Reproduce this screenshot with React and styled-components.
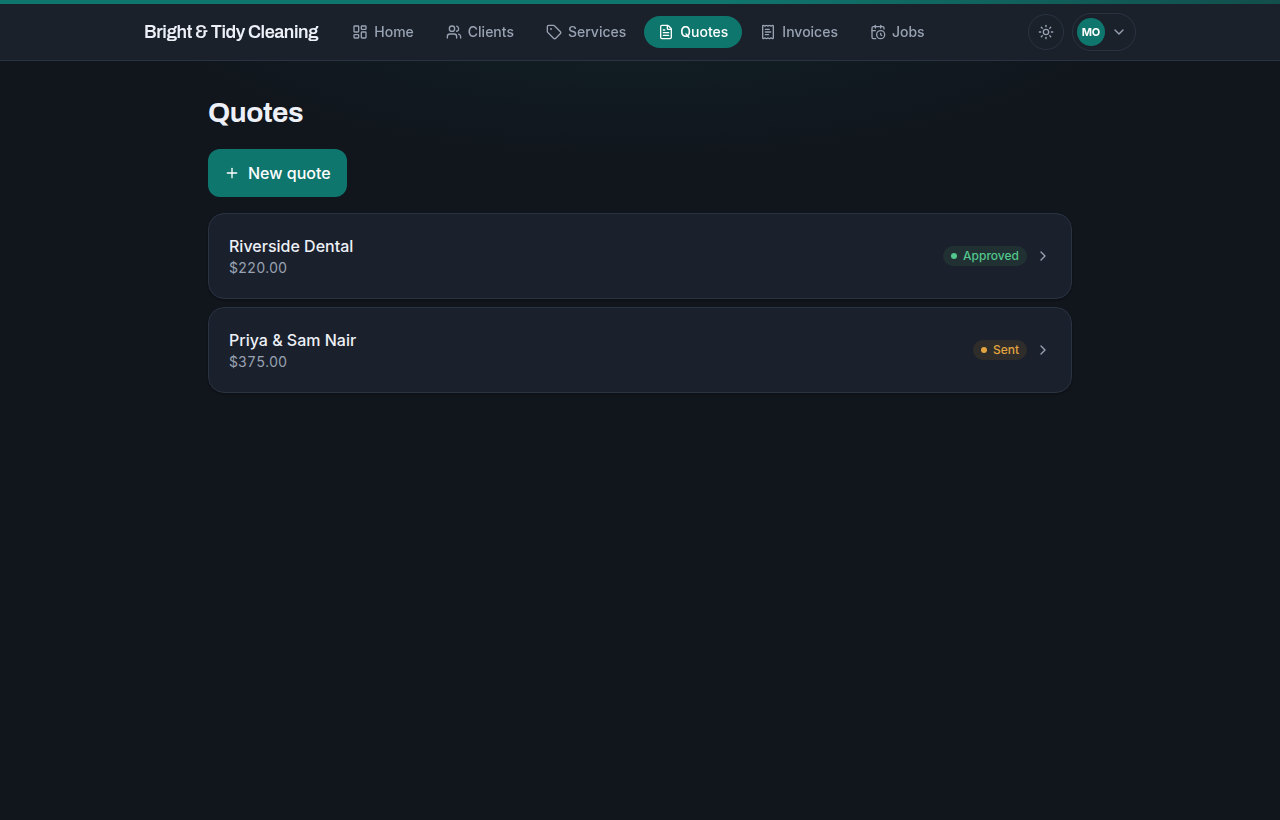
import React from "react";
import styled, { createGlobalStyle, css } from "styled-components";
import {
  LayoutDashboard,
  Users,
  Tag,
  FileText,
  ReceiptText,
  CalendarClock,
  Sun,
  ChevronDown,
  ChevronRight,
  Plus,
} from "lucide-react";

const GlobalStyle = createGlobalStyle`
  *, *::before, *::after { box-sizing: border-box; }
  html { background: #11151c; }
  body {
    margin: 0;
    min-height: 100vh;
    background: radial-gradient(ellipse 540px 175px at 50% 0, rgba(18, 122, 124, 0.11), rgba(18, 122, 124, 0)) no-repeat #11151c;
    color: #edf0f7;
    font-family: Inter, "Liberation Sans", sans-serif;
    font-size: 16px;
    line-height: 24px;
  }
  svg { display: block; flex: none; }
`;

const AccentBar = styled.div`
  height: 4px;
  background: linear-gradient(90deg, #0f766e 0%, #0f766e 55%, #124e4c 100%);
`;

const Header = styled.header`
  height: 57px;
  background: #1a212b;
  border-bottom: 1px solid #2a3342;
  will-change: transform;
`;

const HeaderInner = styled.div`
  display: flex;
  align-items: center;
  width: 992px;
  height: 56px;
  margin: 0 auto;
`;

const Brand = styled.span`
  margin-right: 20px;
  white-space: nowrap;
  font-family: Archivo, "Liberation Sans", sans-serif;
  font-size: 18px;
  font-weight: 600;
  letter-spacing: -0.45px;
`;

const Nav = styled.nav`
  display: flex;
  gap: 4px;
`;

const NavItem = styled.a`
  display: flex;
  align-items: center;
  gap: 6px;
  height: 32px;
  padding: 0 14px;
  border-radius: 16px;
  color: #98a2b3;
  font-size: 14px;
  font-weight: 500;
  line-height: 20px;
  ${({ $active }) =>
    $active &&
    css`
      background: #0f766e;
      color: #fff;
    `}
`;

const Tools = styled.div`
  display: flex;
  align-items: center;
  gap: 8px;
  margin-left: auto;
  color: #98a2b3;
`;

const ThemeButton = styled.button`
  display: grid;
  place-items: center;
  width: 36px;
  height: 36px;
  padding: 0;
  border: 1px solid #2a3342;
  border-radius: 50%;
  background: none;
  color: inherit;
`;

const ProfileButton = styled.button`
  display: flex;
  align-items: center;
  gap: 6px;
  width: 64px;
  height: 38px;
  padding: 0 0 0 4px;
  border: 1px solid #2a3342;
  border-radius: 19px;
  background: none;
  color: inherit;
`;

const Avatar = styled.span`
  display: grid;
  place-items: center;
  width: 28px;
  height: 28px;
  border-radius: 50%;
  background: #0f766e;
  color: #fff;
  font-family: Inter, sans-serif;
  font-size: 11px;
  font-weight: 700;
  line-height: 16px;
`;

const Main = styled.main`
  width: 864px;
  margin: 0 auto;
  padding-top: 32px;
`;

const Title = styled.h1`
  margin: 0 0 16px;
  font-family: Archivo, "Liberation Sans", sans-serif;
  font-size: 28px;
  font-weight: 700;
  letter-spacing: -0.42px;
  line-height: 40px;
`;

const PrimaryButton = styled.button`
  display: flex;
  align-items: center;
  gap: 8px;
  height: 48px;
  padding: 0 16px;
  border: 0;
  border-radius: 12px;
  background: #0f766e;
  color: #fff;
  font: 500 16px/24px Inter, sans-serif;
`;

const List = styled.div`
  display: flex;
  flex-direction: column;
  gap: 8px;
  margin-top: 16px;
`;

const Card = styled.a`
  display: flex;
  align-items: center;
  gap: 8px;
  padding: 20px;
  border: 1px solid #2a3342;
  border-radius: 16px;
  background: #1b212c;
  box-shadow: 0 1px 2px rgba(0, 0, 0, 0.3);
  color: #98a2b3;
`;

const Details = styled.div`
  flex: 1;
`;

const ClientName = styled.div`
  color: #edf0f7;
  font-weight: 500;
`;

const Amount = styled.div`
  font-size: 14px;
  line-height: 20px;
  font-variant-numeric: tabular-nums;
`;

const tones = {
  success: { color: "#53c68c", background: "#203033" },
  warning: { color: "#e2a440", background: "#2f2d2b" },
};

const Badge = styled.span`
  display: flex;
  align-items: center;
  gap: 6px;
  height: 20px;
  padding: 0 8px;
  border-radius: 10px;
  background: ${({ $tone }) => tones[$tone].background};
  color: ${({ $tone }) => tones[$tone].color};
  font-size: 12px;
  font-weight: 500;
  line-height: 16px;
`;

const Dot = styled.span`
  width: 6px;
  height: 6px;
  border-radius: 50%;
  background: currentColor;
`;

const navItems = [
  { label: "Home", icon: LayoutDashboard },
  { label: "Clients", icon: Users },
  { label: "Services", icon: Tag },
  { label: "Quotes", icon: FileText, active: true },
  { label: "Invoices", icon: ReceiptText },
  { label: "Jobs", icon: CalendarClock },
];

const quotes = [
  { client: "Riverside Dental", amount: "$220.00", status: "Approved", tone: "success" },
  { client: "Priya & Sam Nair", amount: "$375.00", status: "Sent", tone: "warning" },
];

export default function App() {
  return (
    <>
      <GlobalStyle />
      <AccentBar />
      <Header>
        <HeaderInner>
          <Brand>Bright &amp; Tidy Cleaning</Brand>
          <Nav>
            {navItems.map(({ label, icon: Icon, active }) => (
              <NavItem key={label} $active={active}>
                <Icon size={16} />
                {label}
              </NavItem>
            ))}
          </Nav>
          <Tools>
            <ThemeButton aria-label="Toggle theme">
              <Sun size={16} />
            </ThemeButton>
            <ProfileButton aria-label="Account">
              <Avatar>MO</Avatar>
              <ChevronDown size={16} />
            </ProfileButton>
          </Tools>
        </HeaderInner>
      </Header>
      <Main>
        <Title>Quotes</Title>
        <PrimaryButton>
          <Plus size={16} />
          New quote
        </PrimaryButton>
        <List>
          {quotes.map((quote) => (
            <Card key={quote.client}>
              <Details>
                <ClientName>{quote.client}</ClientName>
                <Amount>{quote.amount}</Amount>
              </Details>
              <Badge $tone={quote.tone}>
                <Dot />
                {quote.status}
              </Badge>
              <ChevronRight size={16} />
            </Card>
          ))}
        </List>
      </Main>
    </>
  );
}
